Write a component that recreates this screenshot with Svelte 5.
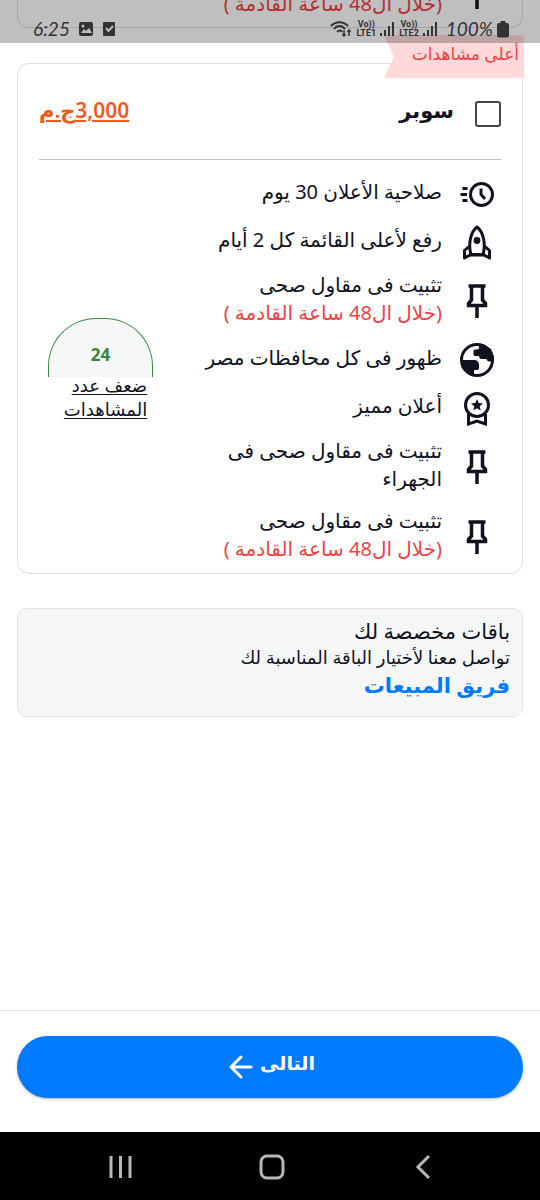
<script>
  const note = '(خلال ال48 ساعة القادمة )';
  const features = [
    { icon: 'clock', text: 'صلاحية الأعلان 30 يوم' },
    { icon: 'rocket', text: 'رفع لأعلى القائمة كل 2 أيام' },
    { icon: 'pin', text: 'تثبيت فى مقاول صحى', note },
    { icon: 'globe', text: 'ظهور فى كل محافظات مصر' },
    { icon: 'medal', text: 'أعلان مميز' },
    { icon: 'pin', text: 'تثبيت فى مقاول صحى فى', second: 'الجهراء' },
    { icon: 'pin', text: 'تثبيت فى مقاول صحى', note }
  ];
  let chosen = $state(false);
</script>

{#snippet icon(name)}
  <svg class="icon" viewBox="0 0 36 36" aria-hidden="true" fill="none" stroke="currentColor" stroke-width="3.500">
    {#if name === 'clock'}
      <circle cx="22.500" cy="18.500" r="11" stroke-width="3" />
      <path d="M22 12.500v6l4 4.500" stroke-width="3" />
      <path d="M3.500 12.500H8.500M1.500 18.500H8M3.500 24.500H8.500" stroke-width="3" />
    {:else if name === 'rocket'}
      <path d="M12 31C9 20 11.500 8 18 3c6.500 5 9 17 6 28z" stroke-width="3" stroke-linejoin="round" />
      <circle cx="18" cy="16.500" r="3.400" fill="currentColor" stroke="none" />
      <path d="M10 22.500 5.500 26.500V34l6.500-3.500h12l6.500 3.500V26.500L26 22.500" stroke-width="3" stroke-linejoin="round" />
    {:else if name === 'pin'}
      <path d="M9.500 3h17M12.500 3v14L9.500 20.500V22.500h17V20.500l-3-3.500V3M18 22.500V35" />
    {:else if name === 'globe'}
      <circle cx="18" cy="18" r="15.500" stroke-width="3" />
      <path fill="currentColor" stroke="none" d="M20 2h4l8 5 3 8v4.500h-5q-2-.2-2.500-2.500H22q-2-.3-2-3h-4.500q-1-.3-1-2V8.500q.3-1 2-1H18q2 0 2-2zM2 18h14q3.500.5 4 4.500v4q-.3 1.500-2 1.500h-2.500q-.5 0-.5 1.500V34l-6-2-6-6z" />
    {:else}
      <circle cx="18" cy="15" r="11.500" stroke-width="3" />
      <path d="M9.500 24v10l8.500-3 8.500 3V24" stroke-width="3" />
      <path fill="currentColor" stroke="none" d="m18 9 1.700 4.100 4.300.3-3.300 2.800 1 4.300-3.700-2.300-3.700 2.300 1-4.300-3.300-2.800 4.300-.3z" />
    {/if}
  </svg>
{/snippet}

{#snippet bars()}
  <svg width="15" height="16" viewBox="0 0 15 16" stroke="currentColor" stroke-width="2" aria-hidden="true"><path d="M1 12v3M5 9v6M9 5v10M13 1v14" /></svg>
{/snippet}

<div class="screen" dir="rtl" lang="ar">
  <header class="status" dir="ltr">
    <span class="clock">6:25</span>
    <svg width="16" height="16" viewBox="0 0 16 16" aria-hidden="true"><rect x="1" y="1" width="14" height="14" rx="2" fill="currentColor" /><path d="M3 12l3-4 2 2 3-3 3 5z" fill="#bfbfbf" /><circle cx="5" cy="5" r="1.500" fill="#bfbfbf" /></svg>
    <svg class="check" width="14" height="16" viewBox="0 0 14 16" aria-hidden="true"><rect x="1" y="1" width="12" height="14" rx="1" fill="currentColor" /><path d="M4 7l2.500 3L11 5" fill="none" stroke="#bfbfbf" stroke-width="2" /></svg>
    <svg class="wifi" width="22" height="18" viewBox="0 0 22 18" fill="none" stroke="currentColor" stroke-width="2" aria-hidden="true"><path d="M1 6c5-5 12-5 17 0M4 9c3-4 8-4 11 0M7 12c2-2 4-2 5 0" /><path d="M14 10v6M12.500 14l1.500 2 1.500-2M19 16v-6M17.500 12l1.500-2 1.500 2" stroke-width="1.500" /></svg>
    <span class="lte">Vo))<br />LTE1</span>
    {@render bars()}
    <span class="lte">Vo))<br />LTE2</span>
    {@render bars()}
    <span class="battery">100%</span>
    <svg width="12" height="17" viewBox="0 0 12 17" fill="currentColor" aria-hidden="true"><path d="M3.500 0h5v2H10q2 0 2 2v10.500q0 2-2 2H2q-2 0-2-2V4q0-2 2-2h1.500z" /></svg>
  </header>

  <main>
    <section class="card previous">
      <div class="feature">
        {@render icon('pin')}
        <p><br /><span class="note">{note}</span></p>
      </div>
    </section>

    <section class="card">
      <div class="ribbon">أعلى مشاهدات</div>
      <div class="heading">
        <label><input type="checkbox" bind:checked={chosen} /><span>سوبر</span></label>
        <span class="price">3,000ج.م</span>
      </div>
      <div class="body">
        <ul>
          {#each features as f}
            <li class="feature">
              {@render icon(f.icon)}
              <p>
                {f.text}
                {#if f.second}<span>{f.second}</span>{/if}
                {#if f.note}<span class="note">{f.note}</span>{/if}
              </p>
            </li>
          {/each}
        </ul>
        <aside>
          <div class="arc">24</div>
          <p>ضعف عدد<br />المشاهدات</p>
        </aside>
      </div>
    </section>

    <section class="contact">
      <h2>باقات مخصصة لك</h2>
      <p>تواصل معنا لأختيار الباقة المناسبة لك</p>
      <a href="#sales">فريق المبيعات</a>
    </section>
  </main>

  <footer>
    <button class="next">
      <span>التالى</span>
      <svg width="24" height="24" viewBox="0 0 24 24" fill="none" stroke="currentColor" stroke-width="3" stroke-linecap="round" stroke-linejoin="round" aria-hidden="true"><path d="M22 12H2M12 2 2 12l10 10" /></svg>
    </button>
  </footer>

  <nav dir="ltr">
    <button aria-label="التطبيقات الأخيرة"><svg width="28" height="28" viewBox="0 0 28 28"><path d="M4 3v22M13.500 3v22M23 3v22" /></svg></button>
    <button aria-label="الرئيسية"><svg width="28" height="28" viewBox="0 0 28 28"><rect x="3" y="3" width="22" height="22" rx="6" /></svg></button>
    <button aria-label="رجوع"><svg width="28" height="28" viewBox="0 0 28 28"><path d="M20 3 9 14l11 11" /></svg></button>
  </nav>
</div>

<style>
  :global(body) { margin: 0; background: #fff; }
  .screen {
    position: relative;
    display: flex;
    flex-direction: column;
    min-height: 100vh;
    overflow: hidden;
    color: #11121f;
    font-family: "Noto Sans", "DejaVu Sans", sans-serif;
    font-size: 20px;
  }
  p, h2, ul { margin: 0; padding: 0; list-style: none; }
  .status {
    position: absolute;
    inset: 0 0 auto;
    z-index: 2;
    display: flex;
    align-items: center;
    gap: 4px;
    box-sizing: border-box;
    height: 43px;
    padding: 15px 31px 0 33px;
    background: rgba(0, 0, 0, 0.25);
    color: #333;
  }
  .clock, .battery { padding-bottom: 2px; font: italic 19px Lato, sans-serif; }
  .clock { margin-right: 4px; }
  .battery { margin-left: 4px; }
  .check { margin-left: 4px; }
  .wifi { margin-left: auto; }
  .lte { font: bold 9px/9px Roboto, sans-serif; text-align: center; }
  main { flex: 1; padding: 0 17px; }
  .card {
    position: relative;
    border: 1px solid #dedfe1;
    border-radius: 12px;
  }
  .previous {
    display: flex;
    align-items: flex-end;
    box-sizing: border-box;
    height: 28px;
    margin-bottom: 35px;
    border-top: 0;
    border-radius: 0 0 12px 12px;
    padding: 0 27px;
  }
  .ribbon {
    position: absolute;
    top: -29px;
    right: -2px;
    box-sizing: border-box;
    width: 140px;
    height: 43px;
    padding-right: 5px;
    background: #ffd9da;
    clip-path: polygon(0 0, 100% 0, 100% 100%, 0 100%, 7% 50%);
    border-radius: 4px 4px 0 0;
    color: #f13e45;
    font-size: 17px;
    line-height: 38px;
  }
  .heading {
    display: flex;
    align-items: center;
    justify-content: space-between;
    height: 95px;
    margin: 0 21px;
    border-bottom: 1px solid #bfc2c9;
  }
  label { display: flex; align-items: center; gap: 21px; font-size: 21px; font-weight: bold; }
  label span, .price { padding-bottom: 4px; }
  input {
    appearance: none;
    width: 26px;
    height: 26px;
    margin: 4px 0 0;
    border: 2px solid #45454f;
    border-radius: 3px;
  }
  input:checked { background: #007aff; }
  .price { color: #f1591f; font-size: 21px; font-weight: 600; text-decoration: underline; }
  .body { display: flex; justify-content: space-between; padding: 10px 27px 1px 30px; }
  .feature { display: flex; align-items: center; gap: 17px; min-height: 48px; }
  .feature p { padding: 5px 0 9px; line-height: 28px; }
  .feature span { display: block; }
  .note { color: #ef4146; }
  .icon { flex: none; width: 36px; height: 36px; }
  aside { display: flex; flex-direction: column; align-items: center; padding-top: 148px; }
  .arc {
    box-sizing: border-box;
    width: 105px;
    height: 59px;
    border: 1px solid #3a8b40;
    border-bottom: 0;
    border-radius: 48px 48px 0 0;
    background: #f5f8f6;
    color: #35863c;
    font-size: 17px;
    font-weight: bold;
    line-height: 72px;
    text-align: center;
  }
  aside p { margin-top: -4px; padding-left: 10px; font-size: 18px; line-height: 24px; text-decoration: underline; text-underline-offset: 2px; }
  .contact {
    display: flex;
    flex-direction: column;
    align-items: flex-start;
    margin-top: 34px;
    padding: 9px 12px 16px;
    border: 1px solid #dfe3e3;
    border-radius: 10px;
    background: #f5f7f7;
  }
  h2 { font-size: 21px; font-weight: normal; line-height: 26px; }
  .contact p { font-size: 18px; line-height: 26px; }
  .contact a { color: #007aff; font-size: 21px; font-weight: bold; line-height: 30px; text-decoration: none; }
  footer { padding: 25px 17px 34px; border-top: 1px solid #e4e4e4; }
  .next {
    display: flex;
    align-items: center;
    justify-content: center;
    gap: 7px;
    width: 100%;
    height: 62px;
    padding: 0 4px 0 0;
    padding: 0 0 0 4px;
    border: 0;
    border-radius: 31px;
    background: #007aff;
    box-shadow: 0 1px 3px rgba(0, 0, 0, 0.3);
    color: #fff;
    font: bold 19px "Noto Sans", "DejaVu Sans", sans-serif;
  }
  .next span { padding-bottom: 8px; }
  nav { display: flex; justify-content: space-around; align-items: center; box-sizing: border-box; height: 68px; padding: 2px 41px 0 45px; background: #000; }
  nav button { display: flex; padding: 0; border: 0; background: none; }
  nav svg { fill: none; stroke: #b8b8b8; stroke-width: 3; }
</style>
